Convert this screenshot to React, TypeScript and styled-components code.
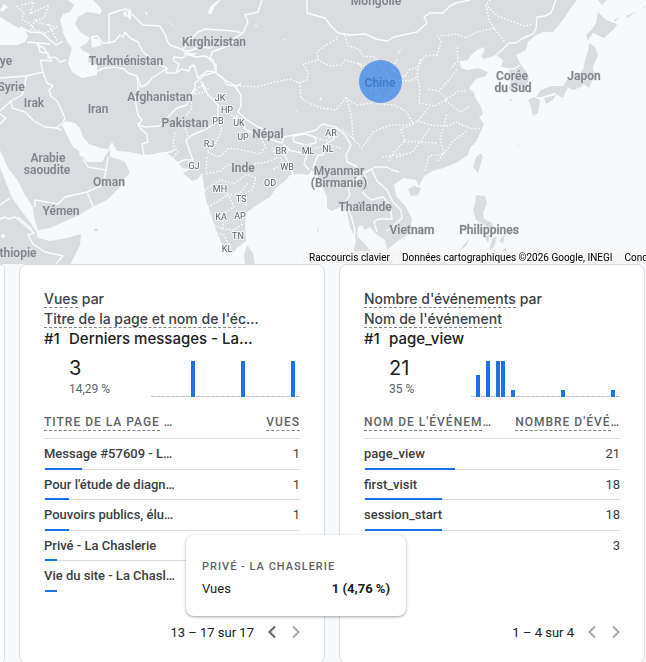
import React from "react";
import styled, { createGlobalStyle } from "styled-components";

const GlobalStyle = createGlobalStyle`
  * { box-sizing: border-box; }
  body {
    margin: 0;
    background: #f8f9fa;
    color: #202124;
    font-family: Roboto, "Liberation Sans", sans-serif;
    overflow: hidden;
  }
`;

const BLUE = "#1a73e8";
const LAND = "#dadce0";
const SEA = "#f8f9fb";

/* ---------- Map ---------- */

const Page = styled.main`
  position: relative;
`;

const MapPanel = styled.section`
  position: relative;
  height: 264px;
  overflow: hidden;
  background: ${SEA};
`;

const MapDrawing = styled.svg`
  display: block;
  width: 100%;
  height: 100%;
  will-change: transform;

  .land { fill: ${LAND}; }
  .sea { fill: ${SEA}; }
  .border { fill: none; stroke: #fbfcfd; stroke-width: 1.4; stroke-linejoin: round; }
  .province { fill: none; stroke: #fcfcfd; stroke-width: 1.7; stroke-linecap: round; stroke-dasharray: 0.1 3.3; }
  text { text-anchor: middle; paint-order: stroke; stroke-linejoin: round; }
  .country { font-size: 12px; font-weight: 600; fill: #80868b; stroke: ${LAND}; stroke-width: 1px; }
  .state { font-size: 9px; fill: #5f6368; stroke: #f6f7f8; stroke-width: 2px; }
`;

const Attribution = styled.div`
  position: absolute;
  right: 0;
  bottom: 0;
  width: 343px;
  height: 13px;
  overflow: hidden;
  display: flex;
  gap: 1px;
  white-space: nowrap;
  font-size: 10px;
  line-height: 13px;
`;

const attributionItem = `
  flex: none;
  padding: 0 5px 0 6px;
  border: 0;
  background: rgba(245, 245, 245, 0.8);
  color: #000;
  font: inherit;
  text-decoration: none;
`;
const AttributionButton = styled.button`${attributionItem}`;
const AttributionText = styled.span`${attributionItem}`;
const AttributionLink = styled.a`${attributionItem}`;

const landMasses = [
  "M0 0H577L570 9 563 20 553 32 543 32 536 35 528 42 526 50 516 55 521 65 526 71 529 79 525 88 513 93 509 88 512 77 508 68 501 67 503 60 496 55 484 59 481 57 485 50 483 47 477 50 471 55 468 60 459 61 461 68 468 70 478 68 488 72 486 76 476 79 469 88 474 93 476 99 481 107 483 114 479 117 484 124 481 131 476 142 470 148 468 155 456 163 443 168 433 171 424 176 419 186 416 180 403 178 394 185 396 196 406 207 412 219 410 233 399 240 387 250 385 240 375 233 370 227 365 230 362 225 358 227 357 236 365 244 372 253 375 265H350L353 254 356 240 350 227 347 212 340 207 332 211 327 208 327 197 320 182 317 175 312 170 308 175 300 174 290 175 285 181 276 188 270 197 260 203 247 212 245 224 246 241 237 248 233 253 228 253 222 244 216 230 211 215 206 200 204 187 202 173 198 179 192 181 183 173 191 169 182 168 178 162 167 153 155 154 143 155 130 152 117 151 112 142 108 149 100 148 95 146 89 144 83 137 80 128 75 123 65 121 62 125 68 137 73 147 78 150 83 157 87 162 102 162 106 155 110 149 110 157 118 159 125 162 130 173 124 179 119 188 107 200 92 207 77 216 50 228 38 230 34 218 33 207 25 195 18 181 8 168 0 150Z",
  "M0 167 5 180 12 198 23 213 29 221 36 231 38 238 50 241 67 238 81 234 80 245 74 257 70 265H0Z",
  "M247 245 253 253 255 265H245L244 255Z",
  "M408 189 414 186 421 188 418 195 411 196Z",
  "M476 157 481 153 483 157 480 166 478 173 473 167Z",
  "M476 195 485 196 487 203 483 213 484 219 492 223 494 230 481 223 476 220 473 210 475 203Z",
  "M484 236 490 235 488 243ZM492 239 497 236 494 247 489 251ZM499 240 505 234 503 244ZM470 238 466 246 457 253ZM496 257 506 247 508 257 508 265H498Z",
  "M598 12 606 20 617 24 615 28 604 38 593 33 588 41 586 35 593 28 596 23Z",
  "M589 43 595 47 598 55 593 67 594 76 589 88 584 84 581 87 573 90 568 87 563 98 554 93 541 97 536 97 541 90 551 86 563 86 567 80 573 80 583 70 585 60 588 51Z",
  "M528 100 534 97 540 100 538 113 533 116 531 107ZM544 98 556 95 553 100 546 104Z",
  "M598 0H607L602 5ZM614 20 619 17 615 22ZM626 16 637 11 627 18ZM642 8 646 5 643 9Z",
  "M509 100 512 99 511 102ZM94 229H98V231H94ZM318 226 319 230 317 233ZM517 145 519 144 518 146Z",
];

const innerSeas = [
  "M0 17 8 22 17 27 25 30 28 36 25 42 17 45 0 45Z",
  "M68 0 74 5 70 12 63 14 60 20 62 27 63 33 68 43 72 48 68 63 72 72 82 78 97 75 97 65 88 62 90 54 82 50 80 47 87 43 90 38 80 32 75 24 78 17 87 12 100 14 102 10 96 3 93 0Z",
  "M91 37 99 40 102 45 92 48Z",
  "M123 12 126 11 127 16 124 17ZM129 8 131 10 131 20 127 17Z",
  "M208 13 210 7 217 1 221 0 214 7 211 15Z",
  "M186 53 196 53 195 55 188 56Z",
  "M0 10 4 4 8 7 2 12ZM164 17 177 29 173 26ZM145 11 149 15 145 14ZM253 24 258 26 256 27ZM79 154 82 147 84 151 81 157ZM33 187 34 183 33 189Z",
  "M1 236A2 2 0 1 0 5 236 2 2 0 1 0 1 236M319 99 322 97 321 101ZM296 111 299 109 297 112ZM283 38 287 40 284 40ZM397 53 403 47 398 54Z",
];

const borders = [
  "M109 43V14L118 11 126 9 135 17 143 25 160 26 166 36 167 41 170 45 178 48 183 50 186 45 182 41 192 38 198 32 205 29 220 30 233 31 243 33 248 22 245 15 258 12 262 0",
  "M91 37 97 36 103 43 109 43 115 41 120 35 123 37 125 32 130 38 138 42 143 52 153 60 160 65 167 68 160 73 152 78 147 84 141 87 137 76 128 73 124 69 115 67 105 68 97 71",
  "M167 68 166 73 176 73 179 64 174 61 174 57 183 58 189 51 183 51M189 51 201 47 210 48 218 43",
  "M184 53 196 57 205 56 213 60 216 72 207 71 198 78 196 71 194 65 190 67 189 71 182 69 176 73",
  "M243 33 235 38 231 45 222 48 212 52 210 60 216 65 216 73 222 77 227 85 236 86 241 84",
  "M137 76 138 88 135 100 138 115 142 120 138 125 145 127 160 126 163 121 170 115 177 108 187 105 189 97 195 89 195 83 205 75 216 72",
  "M138 123 140 128 147 134 148 142 142 144 144 155",
  "M27 42 38 43 40 52 48 53 48 58 55 57 60 62 66 60M37 45 44 48 52 61 41 60 41 64 43 72 26 76 0 78",
  "M43 72 47 83 53 86 49 90 51 96 57 101 60 107 65 118 63 122",
  "M26 76 25 85 22 95 11 101 0 111M11 101 12 108 25 112 34 121 45 127 56 128 63 123M0 124 6 118 0 114M56 128 62 130",
  "M20 27 30 32 42 33 50 40 56 45 63 41M38 43 50 44",
  "M307 0V13L325 18 330 25 338 33 350 35 365 34 376 39 387 41 394 37 403 35 417 32 427 23 424 17 430 13 443 13 450 6 456 3 470 0",
  "M556 0 551 13 545 16 537 17 536 29 533 34 523 38 516 43 509 43 502 50 496 55M503 69 514 69 520 65",
  "M216 73 223 79 234 85 241 95 241 106 238 112 247 120 258 127 275 134 284 137 293 135 305 133 316 130 322 124 336 127 345 135 351 145 346 155 347 162 356 166 362 174 370 170 375 167 387 167 392 170 399 172",
  "M237 115 236 122 248 131 262 137 282 143 284 137M293 136 305 134 315 137 316 143 306 145 294 142Z",
  "M283 144 289 149 285 156 290 165 293 175M288 150 302 153 307 155 304 164 309 170M336 128 334 139 327 143 323 155 318 155 313 168",
  "M362 174 356 180 347 184 350 195 345 203 351 216 355 230 353 243",
  "M365 174 367 183 363 193 371 200 383 197 390 205 392 219 378 219 374 222 377 232M372 170 377 181 387 190 393 202 401 210 402 218 391 228 386 231",
  "M35 207 35 200 58 204 65 197 87 192 103 185 106 170 88 167 83 159M87 192 93 206M106 170 108 157",
  "M0 219 5 217 8 219 15 217 26 226 34 233 28 235 33 244 45 252 63 256 55 265M0 205 10 198M18 217 32 229",
  "M155 154 171 152 175 149M204 130 192 135 186 140 190 152 193 160 184 160 178 163M205 130 218 121 218 105 208 95 202 82",
];

const provinces = [
  "M241 86 257 87 270 83 290 79 299 83 307 80 308 72 303 64 318 60 317 52 326 45 337 39 338 34",
  "M318 60 330 66 341 65 345 60 360 64 372 68M300 83 301 98 309 103 321 108 336 110 346 98 357 105 372 103 379 96",
  "M345 36 348 46 359 49 363 56 375 57 380 66 389 76 394 90 384 101 373 86 379 80M397 60 392 69 404 77 410 69 417 68 425 56 437 55",
  "M437 55 441 42 438 36 457 34 466 38 477 32 494 28 504 41M494 28 489 20 486 5 490 0M486 5 498 16 514 22 524 26 534 24",
  "M420 60 417 75 420 88 419 103 435 106 447 99 439 91 449 80 458 68M439 91 427 89M457 48 458 61 452 67",
  "M346 98 350 110 352 122 353 139 362 148 373 132 390 125 407 125 418 121 429 107M378 104 394 105 406 111 413 124 401 129 405 141 394 152 388 163",
  "M447 99 459 91 468 91M446 101 460 112 471 106M418 121 430 125 444 126 447 113M447 126 456 122 472 129 481 128M444 126 440 139 444 153 437 162M405 141 420 142 430 128",
  "M397 157 412 152 420 142 437 143M425 170 429 156 444 154 453 141 467 131M383 157 400 154M389 80 410 81 418 77M359 64 374 80 370 92",
  "M22 5 34 2 30 14 42 8 49 5 44 18 35 21 48 25 57 27 45 33 35 30 29 23 22 20 24 13 17 6M49 25 57 40M35 20 31 30",
  "M201 82 205 92 190 95 192 108 182 121 188 136M175 133 173 144 178 152 173 158M192 95 200 86 209 89",
  "M218 105 228 112 235 118M215 116 222 129 216 143 207 152 219 157 230 148 247 151 260 154 266 147 260 137",
  "M207 158 206 174 220 171 229 164 244 171 254 164 267 162 277 158 272 147",
  "M205 190 220 180 234 184 247 174 256 178 252 190 240 197 248 207M205 208 217 202 228 194 234 207 223 214 223 229 214 225",
  "M228 195 239 194 247 184M214 232 224 235 230 247M223 229 234 230 243 224M274 169 285 164 280 158 287 151",
  "M314 137 326 141 331 135M308 149 322 147M343 130 354 139M330 145 340 148",
];

type Label = [string, number, number];

const countries: Label[] = [
  ["Mongolie", 376, 5],
  ["Kirghizistan", 214, 46],
  ["Turkménistan", 126, 65],
  ["ye", 6, 65],
  ["Syrie", 11, 91],
  ["Irak", 34, 107],
  ["Iran", 98, 113],
  ["Afghanistan", 160, 101],
  ["Pakistan", 185, 127],
  ["Népal", 268, 138],
  ["Inde", 243, 172],
  ["Arabie", 48, 162],
  ["saoudite", 47, 174],
  ["Oman", 109, 186],
  ["Yémen", 61, 215],
  ["thiopie", 18, 257],
  ["Myanmar", 339, 175],
  ["(Birmanie)", 339, 187],
  ["Thaïlande", 365, 211],
  ["Vietnam", 412, 234],
  ["Philippines", 489, 234],
  ["Corée", 512, 80],
  ["du Sud", 513, 92],
  ["Japon", 584, 80],
];

const states: Label[] = [
  ["JK", 220, 101],
  ["HP", 227, 113],
  ["PB", 218, 124],
  ["UK", 239, 126],
  ["UP", 243, 140],
  ["RJ", 209, 147],
  ["AR", 331, 136],
  ["BR", 281, 154],
  ["ML", 308, 154],
  ["NL", 328, 152],
  ["GJ", 194, 169],
  ["WB", 287, 170],
  ["OD", 270, 186],
  ["MH", 220, 192],
  ["TS", 241, 202],
  ["KA", 221, 220],
  ["AP", 240, 219],
  ["TN", 238, 239],
  ["KL", 227, 252],
];

function WorldMap() {
  return (
    <MapPanel aria-label="Carte">
      <MapDrawing viewBox="0 0 646 264" preserveAspectRatio="xMidYMid slice">
        <path className="land" d={landMasses.join("")} />
        {innerSeas.map((d) => <path key={d} className="sea" d={d} />)}
        {provinces.map((d) => <path key={d} className="province" d={d} />)}
        {borders.map((d) => <path key={d} className="border" d={d} />)}
        {countries.map(([name, x, y]) => (
          <text key={name} className="country" x={x} y={y}>{name}</text>
        ))}
        {states.map(([name, x, y]) => (
          <text key={name} className="state" x={x} y={y}>{name}</text>
        ))}
        <text className="country" x="380" y="87">Chine</text>
        <circle cx="380.5" cy="81.5" r="21.5" fill={BLUE} fillOpacity="0.62" />
      </MapDrawing>
      <Attribution>
        <AttributionButton type="button">Raccourcis clavier</AttributionButton>
        <AttributionText>Données cartographiques ©2026 Google, INEGI</AttributionText>
        <AttributionLink href="#conditions">Conditions d'utilisation</AttributionLink>
      </Attribution>
    </MapPanel>
  );
}

/* ---------- Cards ---------- */

const CardRow = styled.div`
  display: grid;
  grid-template-columns: 5px minmax(0, 1fr) minmax(0, 1fr);
  gap: 14px;
  padding-right: 1px;
`;

const Card = styled.section`
  display: flex;
  flex-direction: column;
  min-height: 400px;
  padding: 24px;
  background: #fff;
  border: 1px solid #dadce0;
  border-radius: 8px;
`;

const PeekingCard = styled.div`
  background: #fff;
  border: 1px solid #dadce0;
  border-left: 0;
  border-radius: 0 8px 8px 0;
`;

const Title = styled.h2`
  margin: 0;
  font: 500 14px/20px "Google Sans", Inter, sans-serif;
  color: #3c4043;
  white-space: nowrap;
`;

const Dashed = styled.span`
  display: inline-block;
  height: 19px;
  line-height: 20px;
  border-bottom: 1px dashed #80868b;
`;

const Leader = styled.div`
  display: grid;
  grid-template-columns: 25px minmax(0, 1fr) 149px;
  grid-template-rows: 20px 60px;
`;

const LeaderName = styled.div`
  grid-column: 2 / 4;
  font: 500 15px/20px "Google Sans", Inter, sans-serif;
  white-space: nowrap;
`;

const Rank = styled.div`
  font: 500 15px/20px "Google Sans", Inter, sans-serif;
`;

const Figures = styled.div`
  grid-column: 2;
  padding-top: 7px;
`;

const Total = styled.div`
  font: 400 20px/24px "Google Sans", Inter, sans-serif;
`;

const Share = styled.div`
  font-size: 12px;
  line-height: 18px;
  color: #5f6368;
`;

const Chart = styled.svg`
  margin-top: 12px;
`;

const Table = styled.table`
  width: 100%;
  table-layout: fixed;
  border-collapse: separate;
  border-spacing: 0;
`;

const Row = styled.tr`
  position: relative;
  height: 30px;

  &:nth-child(odd) { height: 31px; }
  &:not(:last-child) > td { border-bottom: 1px solid #dadce0; }
`;

const HeadCell = styled.th<{ $end?: boolean }>`
  height: 30px;
  padding: 0;
  border-bottom: 1px solid #dadce0;
  vertical-align: top;
  text-align: ${(p) => (p.$end ? "right" : "left")};
  font-size: 12px;
  font-weight: 500;
  letter-spacing: 1px;
  color: #5f6368;
  white-space: nowrap;
`;

const HeadLabel = styled.span`
  display: inline-block;
  height: 22px;
  line-height: 26px;
  border-bottom: 1px dashed #80868b;
`;

const Cell = styled.td`
  padding: 0;
  vertical-align: top;
  font-size: 13px;
  line-height: 29px;
  color: #3c4043;
  white-space: nowrap;
`;

const NameCell = styled(Cell)`
  font-weight: 500;
`;

const ValueCell = styled(Cell)`
  text-align: right;
`;

const Bar = styled.div`
  position: absolute;
  left: 1px;
  bottom: 0;
  height: 2px;
  background: ${BLUE};
`;

const Pager = styled.nav`
  display: flex;
  justify-content: flex-end;
  align-items: center;
  margin-top: auto;
  margin-bottom: -5px;
  height: 24px;
  font-size: 13px;
`;

const Count = styled.span`
  margin-right: 6px;
`;

const PageButton = styled.button`
  display: grid;
  place-items: center;
  width: 24px;
  height: 24px;
  padding: 0;
  border: 0;
  background: none;
  color: #5f6368;

  &:disabled { color: #a8abae; }
  &:last-child { margin-right: -8px; }
`;

function Chevron({ back }: { back?: boolean }) {
  return (
    <svg width="12" height="14" viewBox="0 0 12 14" fill="none" stroke="currentColor" strokeWidth="2">
      <path d={back ? "M9 1.5 3.5 7 9 12.5" : "M3 1.5 8.5 7 3 12.5"} />
    </svg>
  );
}

function Sparkline({ bars }: { bars: Record<number, number> }) {
  return (
    <Chart width="149" height="36" viewBox="0 0 149 36" aria-hidden="true" shapeRendering="crispEdges">
      {Array.from({ length: 30 }, (_, i) => {
        const h = bars[i] ?? 1;
        return <rect key={i} x={i * 5} y={36 - h} width="4" height={h} fill={bars[i] ? BLUE : "#bdc1c6"} />;
      })}
    </Chart>
  );
}

type Entry = { name: string; value: number; percent: number };

type ReportProps = {
  metric: string;
  dimension: string;
  clipped?: boolean;
  leader: string;
  total: string;
  share: string;
  bars: Record<number, number>;
  heads: [string, string];
  headEnds: [string, string];
  rows: Entry[];
  count: string;
  hasPrevious?: boolean;
};

function Report(p: ReportProps) {
  return (
    <Card>
      <Title>
        <Dashed>{p.metric}</Dashed> par<br />
        <Dashed>{p.dimension}</Dashed>{p.clipped && "…"}
      </Title>
      <Leader>
        <Rank>#1</Rank>
        <LeaderName>{p.leader}</LeaderName>
        <Figures>
          <Total>{p.total}</Total>
          <Share>{p.share}</Share>
        </Figures>
        <Sparkline bars={p.bars} />
      </Leader>
      <Table>
        <thead>
          <tr>
            {p.heads.map((h, i) => (
              <HeadCell key={h} scope="col" $end={i === 1}>
                <HeadLabel>{h}</HeadLabel>{p.headEnds[i]}
              </HeadCell>
            ))}
          </tr>
        </thead>
        <tbody>
          {p.rows.map((r) => (
            <Row key={r.name}>
              <NameCell>{r.name}<Bar style={{ width: `${r.percent}%` }} /></NameCell>
              <ValueCell>{r.value}</ValueCell>
            </Row>
          ))}
        </tbody>
      </Table>
      <Pager aria-label="Pagination">
        <Count>{p.count}</Count>
        <PageButton type="button" aria-label="Page précédente" disabled={!p.hasPrevious}><Chevron back /></PageButton>
        <PageButton type="button" aria-label="Page suivante" disabled><Chevron /></PageButton>
      </Pager>
    </Card>
  );
}

/* ---------- Tooltip ---------- */

const Tooltip = styled.div`
  position: absolute;
  left: 186px;
  top: 535px;
  width: 220px;
  padding: 22px 16px 16px;
  background: #fff;
  border-radius: 8px;
  box-shadow: 0 1px 3px 1px rgba(60, 64, 67, 0.15), 0 1px 2px rgba(60, 64, 67, 0.3);
`;

const TooltipTitle = styled.div`
  font-size: 11px;
  line-height: 20px;
  font-weight: 500;
  letter-spacing: 1px;
  color: #5f6368;
`;

const TooltipLine = styled.div`
  display: flex;
  justify-content: space-between;
  font-size: 13px;
  line-height: 23px;

  strong { font-weight: 700; }
`;

export default function App() {
  return (
    <Page>
      <GlobalStyle />
      <WorldMap />
      <CardRow>
        <PeekingCard />
        <Report
          metric="Vues"
          dimension="Titre de la page et nom de l'éc"
          clipped
          leader="Derniers messages - La…"
          total="3"
          share="14,29 %"
          bars={{ 8: 36, 18: 36, 28: 36 }}
          heads={["TITRE DE LA PAGE", "VUES"]}
          headEnds={[" …", ""]}
          rows={[
            { name: "Message #57609 - L…", value: 1, percent: 14.29 },
            { name: "Pour l'étude de diagn…", value: 1, percent: 9.52 },
            { name: "Pouvoirs publics, élu…", value: 1, percent: 9.52 },
            { name: "Privé - La Chaslerie", value: 1, percent: 4.76 },
            { name: "Vie du site - La Chasl…", value: 1, percent: 4.76 },
          ]}
          count="13 – 17 sur 17"
          hasPrevious
        />
        <Report
          metric="Nombre d'événements"
          dimension="Nom de l'événement"
          leader="page_view"
          total="21"
          share="35 %"
          bars={{ 1: 22, 3: 36, 5: 36, 6: 36, 8: 7, 18: 7, 28: 7 }}
          heads={["NOM DE L'ÉVÉNEM", "NOMBRE D'ÉVÉ"]}
          headEnds={["…", "…"]}
          rows={[
            { name: "page_view", value: 21, percent: 35 },
            { name: "first_visit", value: 18, percent: 30 },
            { name: "session_start", value: 18, percent: 30 },
            { name: "scroll", value: 3, percent: 5 },
          ]}
          count="1 – 4 sur 4"
        />
      </CardRow>
      <Tooltip role="tooltip">
        <TooltipTitle>PRIVÉ - LA CHASLERIE</TooltipTitle>
        <TooltipLine><span>Vues</span><strong>1 (4,76 %)</strong></TooltipLine>
      </Tooltip>
    </Page>
  );
}
